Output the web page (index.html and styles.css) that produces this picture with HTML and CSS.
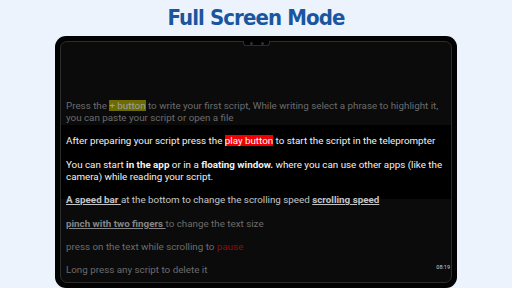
FILE: index.html
```html
<!DOCTYPE html>
<html>
<head>
<meta charset="utf-8">
<link rel="stylesheet" href="styles.css">
</head>
<body>
<h1 class="title">Full Screen Mode</h1>
<div class="tablet">
  <div class="screen">
    <div class="notch"><span class="cam"></span><span class="cam"></span></div>
    <p class="p dim">Press the <span class="hl-olive">+ button</span> to write your first script, While writing select a phrase to highlight it, you can paste your script or open a file</p>
    <p class="p bright">After preparing your script press the <span class="hl-red">play button</span> to start the script in the teleprompter</p>
    <p class="p bright">You can start <b>in the app</b> or in a <b>floating window.</b> where you can use other apps (like the camera) while reading your script.</p>
    <p class="p mid"><b class="u">A speed bar </b>at the bottom to change the scrolling speed <b class="u">scrolling speed</b></p>
    <p class="p dim"><b class="u soft">pinch with two fingers </b>to change the text size</p>
    <p class="p dim">press on the text while scrolling to <span class="pause">pause</span></p>
    <p class="p dim">Long press any script to delete it</p>
    <span class="time">08:19</span>
  </div>
</div>
</body>
</html>
```
FILE: styles.css
```css
html, body { margin: 0; padding: 0; }
body {
  background: #edf3fd;
  width: 512px;
  height: 288px;
  overflow: hidden;
  font-family: Roboto, "Liberation Sans", sans-serif;
}
.title {
  margin: 0;
  height: 36px;
  line-height: 36px;
  text-align: center;
  font-family: "DejaVu Sans", sans-serif;
  font-stretch: condensed;
  font-weight: bold;
  font-size: 22px;
  letter-spacing: -0.9px;
  color: #1a569f;
}
.tablet {
  width: 392px;
  margin-left: 55px;
  padding: 5px;
  height: 242px;
  background: #020202;
  border-radius: 11px;
}
.screen {
  position: relative;
  border: 1px solid #2c2c2c;
  border-radius: 7px;
  box-sizing: border-box;
  height: 242px;
  padding: 58px 6px 0 5px;
  background: linear-gradient(to bottom, #0b0b0b 0, #0b0b0b 83px, #000 83px, #000 157px, #0b0b0b 157px);
}
.notch {
  position: absolute;
  top: -1px;
  left: 182px;
  width: 25px;
  height: 4px;
  border: 1px solid #2c2c2c;
  border-top: none;
  border-radius: 0 0 3px 3px;
  background: #020202;
  display: flex;
  justify-content: center;
  gap: 8px;
  align-items: center;
}
.cam {
  width: 3px;
  height: 3px;
  border-radius: 50%;
  background: #2e3236;
}
.p {
  margin: 0 0 11.4px 0;
  font-size: 9.8px;
  line-height: 12px;
}
.dim { color: #6c6c6c; }
.bright { color: #f2f2f2; }
.mid { color: #c4c4c4; }
.u { text-decoration: underline; }
.soft { color: #858585; }
.hl-olive { background: #6d6b00; color: #9aa0a4; }
.hl-red { background: #f00000; color: #fff; }
.pause { color: #8e0c0c; }
.time {
  position: absolute;
  right: 1px;
  bottom: 12px;
  font-size: 5.5px;
  color: #cfcfcf;
}
```
